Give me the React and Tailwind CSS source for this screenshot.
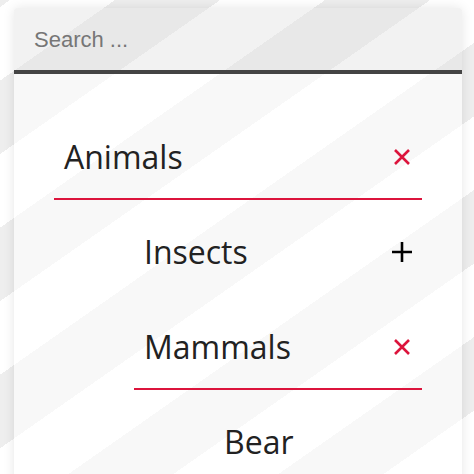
import React, { useState } from 'react';

const tree = [
  {
    id: 'animals',
    label: 'Animals',
    children: [
      { id: 'insects', label: 'Insects', children: [{ id: 'ant', label: 'Ant' }] },
      {
        id: 'mammals',
        label: 'Mammals',
        children: [
          { id: 'bear', label: 'Bear' },
          { id: 'cat', label: 'Cat' },
        ],
      },
    ],
  },
];

function CloseIcon() {
  return (
    <svg width="20" height="20" viewBox="0 0 20 20" className="text-[#dc143c]">
      <path d="M3 3L17 17M17 3L3 17" stroke="currentColor" strokeWidth="2.6" />
    </svg>
  );
}

function PlusIcon() {
  return (
    <svg width="20" height="20" viewBox="0 0 20 20" className="text-black">
      <path d="M10 0V20M0 10H20" stroke="currentColor" strokeWidth="2.6" />
    </svg>
  );
}

function Node({ node, open, toggle }) {
  const isOpen = open.includes(node.id);
  const hasChildren = node.children && node.children.length > 0;

  return (
    <li className="mt-[11px]">
      <div
        onClick={() => hasChildren && toggle(node.id)}
        className={`flex items-center justify-between py-[19px] pl-[10px] pr-[10px] border-b-2 cursor-pointer ${
          isOpen ? 'border-[#dc143c]' : 'border-transparent'
        }`}
      >
        <span className="text-[32px] leading-[44px] text-[#222]">{node.label}</span>
        {hasChildren && (isOpen ? <CloseIcon /> : <PlusIcon />)}
      </div>
      {hasChildren && isOpen && (
        <ul className="ml-[80px]">
          {node.children.map(child => (
            <Node key={child.id} node={child} open={open} toggle={toggle} />
          ))}
        </ul>
      )}
    </li>
  );
}

export default function App() {
  const [open, setOpen] = useState(['animals', 'mammals']);
  const [query, setQuery] = useState('');

  const toggle = (id) => {
    setOpen(prev => (prev.includes(id) ? prev.filter(o => o !== id) : [...prev, id]));
  };

  return (
    <div className="h-screen overflow-hidden bg-[repeating-linear-gradient(145deg,#eeeeee_0px,#eeeeee_5.75px,#ffffff_5.75px,#ffffff_66px,#eeeeee_66px,#eeeeee_120.5px)] font-['Open_Sans',sans-serif]">
      <div className="ml-[14px] mt-[8px] w-[448px] rounded-t-[4px] overflow-hidden shadow-[0_0_12px_rgba(0,0,0,0.1)]">
        {/* Search */}
        <div className="h-[66px] bg-[rgba(223,223,223,0.41)] border-b-4 border-[#444] flex items-center px-[20px]">
          <input
            type="text"
            value={query}
            onChange={(e) => setQuery(e.target.value)}
            placeholder="Search ..."
            className="w-full bg-transparent outline-none text-[22px] text-[#333] placeholder:text-[#767676] font-['Liberation_Sans',Arial,sans-serif]"
          />
        </div>

        {/* Tree */}
        <ul className="bg-[rgba(255,255,255,0.6)] pt-[31px] px-[40px] pb-[40px]">
          {tree.map(node => (
            <Node key={node.id} node={node} open={open} toggle={toggle} />
          ))}
        </ul>
      </div>
    </div>
  );
}
